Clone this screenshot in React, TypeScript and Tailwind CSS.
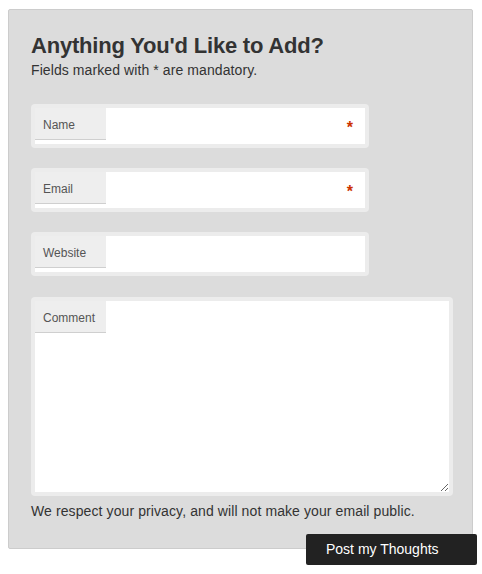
import React from "react";

const font = { fontFamily: '"Liberation Sans", Arial, sans-serif' };

function Field({ label, required = false }: { label: string; required?: boolean }) {
  return (
    <div className="h-[44px] w-[338px] rounded-[4px] bg-[#ececec] p-[4px]">
      <div className="flex h-full items-start bg-white">
        <div className="flex h-[32px] w-[71px] shrink-0 items-center border-b border-[#cfcfcf] bg-[#eeeeee] pl-[8px] pt-[3px] text-[12px] text-[#555]">
          {label}
        </div>
        <input className="h-full min-w-0 flex-1 bg-white outline-none" />
        {required && (
          <span className="mr-[12px] mt-[12px] text-[16px] font-bold leading-[16px] text-[#cc3300]">*</span>
        )}
      </div>
    </div>
  );
}

export default function App() {
  return (
    <div className="min-h-[574px] bg-white pl-[8px] pt-[9px]" style={font}>
      <div className="w-[465px] rounded-[2px] border border-[#cccccc] bg-[#dcdcdc] px-[22px] pb-[27px] pt-[22px]">
        <h2 className="text-[22px] font-bold leading-[28px] tracking-[-0.2px] text-[#333]">Anything You'd Like to Add?</h2>
        <p className="mt-[1px] text-[14px] leading-[18px] tracking-[0.09px] text-[#333]">Fields marked with * are mandatory.</p>
        <form className="mt-[25px] flex flex-col gap-[20px]">
          <Field label="Name" required />
          <Field label="Email" required />
          <Field label="Website" />
          <div className="mt-[1px] h-[199px] w-[422px] rounded-[4px] bg-[#ececec] p-[4px]">
            <div className="relative flex h-full items-start bg-white">
              <div className="flex h-[32px] w-[71px] shrink-0 items-center border-b border-[#cfcfcf] bg-[#eeeeee] pl-[8px] pt-[3px] text-[12px] text-[#555]">
                Comment
              </div>
              <textarea className="h-full min-w-0 flex-1 resize bg-white outline-none" />
            </div>
          </div>
        </form>
        <p className="mt-[5px] text-[14px] leading-[20px] tracking-[0.1px] text-[#333]">
          We respect your privacy, and will not make your email public.
        </p>
      </div>
      <div className="relative -mt-[15px] flex w-[469px] justify-end">
        <button className="h-[31px] w-[171px] rounded-[2px] bg-[#222222] pl-[20px] text-left text-[14px] text-white">
          Post my Thoughts
        </button>
      </div>
    </div>
  );
}
